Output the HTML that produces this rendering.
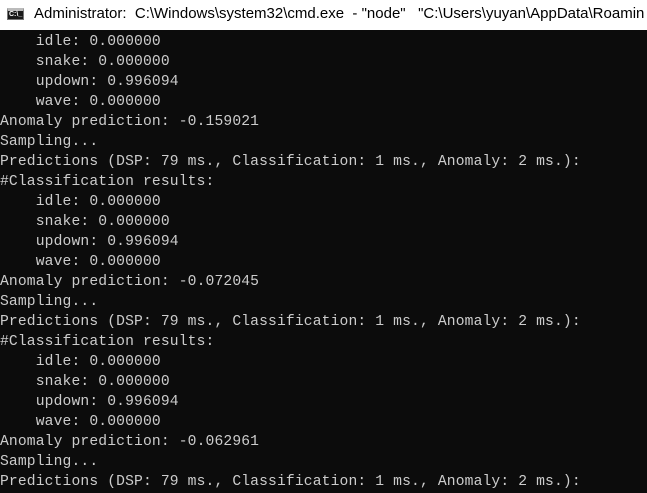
<!DOCTYPE html>
<html><head><meta charset="utf-8"><style>
html,body{margin:0;padding:0;width:647px;height:493px;overflow:hidden;background:#0c0c0c}
.tb{position:absolute;left:0;top:0;width:647px;height:30px;background:#fff;overflow:hidden}
.ic{position:absolute;left:7px;top:8px;width:17px;height:12px;background:#1a1a1a;border:1px solid #777;border-top:3px solid #bbb;box-sizing:border-box;color:#fff;font:bold 7px "Liberation Sans",sans-serif;line-height:8px;padding-left:1px}
.tt{position:absolute;left:34px;top:5px;font:15px "Liberation Sans",sans-serif;color:#000;white-space:pre}
pre{position:absolute;left:0;top:32px;margin:0;font:14.67px/20px "Liberation Mono",monospace;letter-spacing:0.14px;color:#cccccc}
</style></head><body>
<div class="tb"><div class="ic">C:\_</div><div class="tt">Administrator:  C:\Windows\system32\cmd.exe  - "node"   "C:\Users\yuyan\AppData\Roamin</div></div>
<pre>    idle: 0.000000
    snake: 0.000000
    updown: 0.996094
    wave: 0.000000
Anomaly prediction: -0.159021
Sampling...
Predictions (DSP: 79 ms., Classification: 1 ms., Anomaly: 2 ms.):
#Classification results:
    idle: 0.000000
    snake: 0.000000
    updown: 0.996094
    wave: 0.000000
Anomaly prediction: -0.072045
Sampling...
Predictions (DSP: 79 ms., Classification: 1 ms., Anomaly: 2 ms.):
#Classification results:
    idle: 0.000000
    snake: 0.000000
    updown: 0.996094
    wave: 0.000000
Anomaly prediction: -0.062961
Sampling...
Predictions (DSP: 79 ms., Classification: 1 ms., Anomaly: 2 ms.):</pre>
</body></html>
